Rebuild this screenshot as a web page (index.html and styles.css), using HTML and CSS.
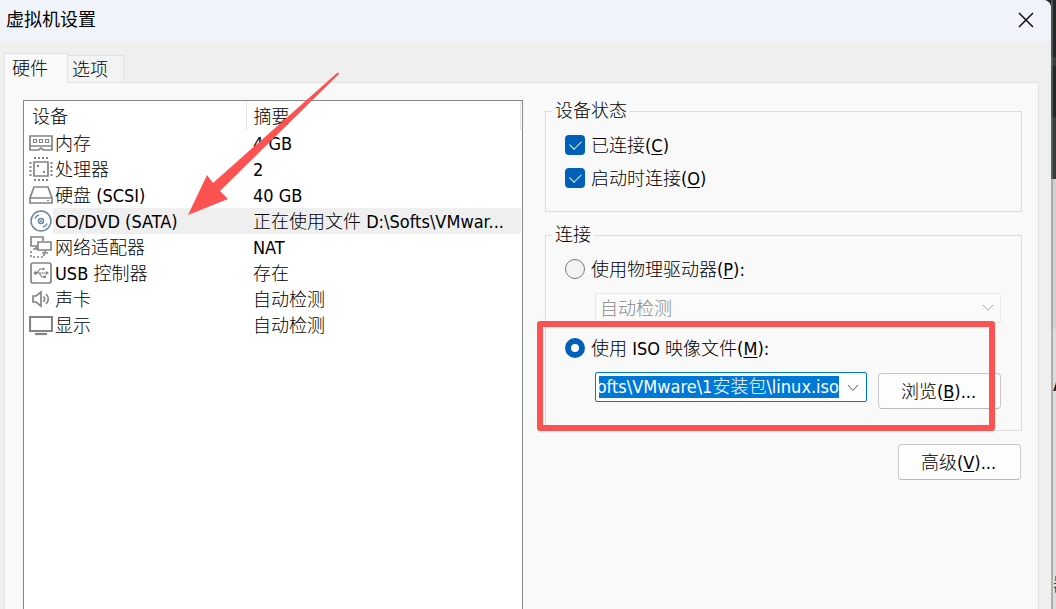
FILE: index.html
```html
<!DOCTYPE html>
<html lang="zh-CN">
<head>
    <meta charset="UTF-8">
    <meta name="viewport" content="width=device-width, initial-scale=1.0">
    <title>虚拟机设置</title>
    <link rel="stylesheet" href="styles.css">
</head>
<body>
    <main class="window">
        <header class="title-bar">
            <h1>虚拟机设置</h1>
            <button class="close-btn" aria-label="关闭">
                <svg width="16" height="16" viewBox="0 0 16 16"><path d="M1 1L15 15M15 1L1 15"/></svg>
            </button>
        </header>

        <nav class="tabs">
            <button class="tab active">硬件</button>
            <button class="tab">选项</button>
        </nav>

        <div class="panel">
            <div class="device-list">
                <table>
                    <thead>
                        <tr><th class="device">设备</th><th>摘要</th></tr>
                    </thead>
                    <tbody>
                        <tr>
                            <td class="device"><div>
                                <svg class="icon" viewBox="0 0 24 24"><path d="M1 5H23V15H1ZM1 15V19H9.500L12 17L14.500 19H23V15"/><path class="thin" d="M4.500 8.500H7.500V11.500H4.500ZM10.500 8.500H13.500V11.500H10.500ZM16.500 8.500H19.500V11.500H16.500Z"/></svg>
                                <span>内存</span>
                            </div></td>
                            <td>4 GB</td>
                        </tr>
                        <tr>
                            <td class="device"><div>
                                <svg class="icon" viewBox="0 0 24 24"><path d="M5 5H19V19H5Z"/><path class="pins" d="M5 1H19M5 23H19M1.500 5V19M22.500 5V19"/><circle class="fill" cx="9" cy="9" r="1.200"/><circle class="fill" cx="15" cy="15" r="1.200"/></svg>
                                <span>处理器</span>
                            </div></td>
                            <td>2</td>
                        </tr>
                        <tr>
                            <td class="device"><div>
                                <svg class="icon" viewBox="0 0 24 24"><path d="M5 4H19L23 15V20H1V15ZM1 15H23"/><path class="thin" d="M18 17.500H20"/></svg>
                                <span>硬盘 (SCSI)</span>
                            </div></td>
                            <td>40 GB</td>
                        </tr>
                        <tr class="selected">
                            <td class="device"><div>
                                <svg class="icon disc" viewBox="0 0 24 24"><circle cx="12" cy="12" r="10"/><circle cx="12" cy="12" r="2.500"/><circle class="fill" cx="12" cy="12" r="1"/><path d="M6 9.500C6.500 8 8 6.500 10 6M18 14.500C17.500 16 16 17.500 14 18"/></svg>
                                <span>CD/DVD (SATA)</span>
                            </div></td>
                            <td>正在使用文件 D:\Softs\VMwar...</td>
                        </tr>
                        <tr>
                            <td class="device"><div>
                                <svg class="icon" viewBox="0 0 24 24"><path d="M8 11H2V2H14V6M4 14H9M7 11V14"/><path d="M9 7H22V15H9ZM13 18H19M16 15V18"/><path class="dots" d="M2 16V22H15V18"/></svg>
                                <span>网络适配器</span>
                            </div></td>
                            <td>NAT</td>
                        </tr>
                        <tr>
                            <td class="device"><div>
                                <svg class="icon" viewBox="0 0 24 24"><rect x="2" y="2" width="20" height="20" rx="2"/><path class="thin" d="M6 12H18M8 12L11 8H14M10 12L13 16H16"/><circle class="fill" cx="6.500" cy="12" r="1.800"/><circle class="fill" cx="14.500" cy="8" r="1.200"/><path class="fill" d="M14.500 14.500H17V17H14.500ZM17 10L20 12L17 14Z"/></svg>
                                <span>USB 控制器</span>
                            </div></td>
                            <td>存在</td>
                        </tr>
                        <tr>
                            <td class="device"><div>
                                <svg class="icon" viewBox="0 0 24 24"><path d="M4 9H7L12 5V19L7 15H4Z"/><path d="M14.500 9.500C16 11 16 13 14.500 15M17 7C20 10 20 14 17 17"/></svg>
                                <span>声卡</span>
                            </div></td>
                            <td>自动检测</td>
                        </tr>
                        <tr>
                            <td class="device"><div>
                                <svg class="icon" viewBox="0 0 24 24"><path class="thick" d="M1 4H23V18H1Z"/><path class="thick" d="M6 21H18"/></svg>
                                <span>显示</span>
                            </div></td>
                            <td>自动检测</td>
                        </tr>
                    </tbody>
                </table>
                <svg class="arrow" width="152" height="144" viewBox="0 0 152 144"><path d="M0 143L19 103L25 111L149 1Q151 0 151 2L32 119L40 127Z"/></svg>
            </div>

            <div class="settings">
                <fieldset>
                    <legend>设备状态</legend>
                    <div class="status-options">
                        <label><input type="checkbox" checked><span>已连接(<u>C</u>)</span></label>
                        <label><input type="checkbox" checked><span>启动时连接(<u>O</u>)</span></label>
                    </div>
                </fieldset>

                <div class="connection">
                    <fieldset>
                        <legend>连接</legend>
                        <div class="connection-options">
                            <label><input type="radio" name="source"><span>使用物理驱动器(<u>P</u>):</span></label>
                            <div class="drive-select">
                                <select aria-label="物理驱动器" disabled>
                                    <option>自动检测</option>
                                </select>
                                <svg class="chevron" width="12" height="8" viewBox="0 0 12 8"><path d="M1 1L6 6.500L11 1"/></svg>
                            </div>
                            <label><input type="radio" name="source" checked><span>使用 ISO 映像文件(<u>M</u>):</span></label>
                            <div class="iso-row">
                                <div class="combo">
                                    <input type="text" id="isoPath" aria-label="ISO 映像文件" value="D:\Softs\VMware\1安装包\linux.iso" spellcheck="false">
                                    <button aria-label="展开">
                                        <svg class="chevron" width="12" height="8" viewBox="0 0 12 8"><path d="M1 1L6 6.500L11 1"/></svg>
                                    </button>
                                </div>
                                <button class="push-btn">浏览(<u>B</u>)...</button>
                            </div>
                        </div>
                    </fieldset>
                    <div class="highlight-frame"></div>
                </div>

                <button class="push-btn advanced">高级(<u>V</u>)...</button>
            </div>
        </div>
    </main>

    <aside class="backdrop">
        <b>A</b>
        <span>器</span>
    </aside>

    <script>
        // Select the path and keep its end in view
        const isoPath = document.getElementById('isoPath');
        isoPath.focus();
        isoPath.select();
        isoPath.scrollLeft = isoPath.scrollWidth;
    </script>
</body>
</html>
```
FILE: styles.css
```css
* {
    margin: 0;
    padding: 0;
    box-sizing: border-box;
}

body {
    display: grid;
    grid-template-columns: minmax(0, 1fr) 5px;
    height: 100vh;
    overflow: hidden;
    background: #242727;
    color: #000;
    font-family: "DejaVu Sans Condensed", "Noto Sans CJK SC", sans-serif;
    font-size: 18px;
    font-weight: 300;
    line-height: 22px;
}

button, input, select {
    font: inherit;
    color: inherit;
}

u {
    text-underline-offset: 2px;
}

.window {
    display: flex;
    flex-direction: column;
    min-height: 0;
    background: #efefef;
    border-top-right-radius: 8px;
    overflow: hidden;
}

/* Title bar */
.title-bar {
    display: flex;
    justify-content: space-between;
    align-items: center;
    flex: none;
    height: 42px;
    padding: 0 17px 2px 6px;
    background: #f0f3f9;
}

.title-bar h1 {
    font-size: 18px;
    font-weight: 400;
}

.close-btn {
    display: flex;
    border: none;
    background: none;
}

.close-btn path {
    fill: none;
    stroke: #111;
    stroke-width: 1.5;
}

/* Tabs */
.tabs {
    display: flex;
    align-items: flex-end;
    flex: none;
    height: 41px;
    padding-left: 4px;
}

.tab {
    width: 56px;
    height: 28px;
    padding: 2px 11px 0 0;
    border: 1px solid #e2e2e2;
    border-left: none;
    background: #f3f3f3;
}

.tab.active {
    position: relative;
    width: 64px;
    height: 30px;
    padding: 0 12px 0 0;
    border: 1px solid #e2e2e2;
    border-bottom: none;
    background: #f9f9f9;
}

.panel {
    display: grid;
    grid-template-columns: minmax(0, 500fr) minmax(0, 477fr);
    gap: 22px;
    flex: 1;
    min-height: 0;
    margin: -1px 12px 0 4px;
    padding: 17px 16px 0 18px;
    border: 1px solid #e2e2e2;
    border-bottom: none;
    background: #f9f9f9;
}

/* Device list */
.device-list {
    position: relative;
    padding: 0 1px 0 5px;
    border: 1px solid #828790;
    border-bottom: none;
    background: #fff;
}

table {
    width: 100%;
    border-collapse: collapse;
    table-layout: fixed;
}

th {
    height: 29px;
    padding: 2px 0 0 7px;
    border-right: 1px solid #e2e2e2;
    font-weight: inherit;
    text-align: left;
}

th.device {
    width: 217px;
    padding-left: 3px;
}

td {
    height: 26px;
    padding: 2px 0 0 7px;
    white-space: nowrap;
}

td.device {
    padding: 0;
}

td.device div {
    display: flex;
    align-items: center;
}

td.device span {
    flex: 1;
    padding: 3px 2px 1px;
}

.selected td:not(.device),
.selected span {
    background: #efefef;
}

.icon {
    width: 24px;
    height: 24px;
    fill: none;
    stroke: #858585;
    stroke-width: 1.7;
}

.icon .thin {
    stroke-width: 1.2;
}

.icon .pins {
    stroke-width: 2;
    stroke-dasharray: 2;
}

.icon .dots {
    stroke-dasharray: 2;
}

.icon .thick {
    stroke-width: 2.2;
}

.icon .fill {
    fill: #858585;
    stroke: none;
}

.icon.disc {
    stroke: #6685a3;
    stroke-width: 1.5;
}

.arrow {
    position: absolute;
    top: -29px;
    left: 164px;
    fill: #fd5252;
}

/* Settings */
fieldset {
    min-width: 0;
    border: 1px solid #dcdcdc;
}

legend {
    margin-left: 6px;
    padding: 0 3px;
}

label {
    display: flex;
    align-items: center;
    gap: 6px;
    height: 22px;
}

label span {
    padding-top: 2px;
}

.status-options {
    display: grid;
    gap: 11px;
    padding: 12px 19px 22px;
}

input[type="checkbox"],
input[type="radio"] {
    appearance: none;
    width: 20px;
    height: 20px;
}

input[type="checkbox"] {
    display: grid;
    place-items: center;
    border-radius: 4px;
    background: #005fb8;
}

input[type="checkbox"]::before {
    content: "";
    width: 10px;
    height: 6px;
    margin-bottom: 3px;
    border: solid #fff;
    border-width: 0 0 1px 1px;
    transform: rotate(-45deg);
}

input[type="radio"] {
    border: 1px solid #777;
    border-radius: 50%;
    background: #f3f3f3;
}

input[type="radio"]:checked {
    border: 6px solid #005fb8;
    background: #fff;
}

.connection {
    position: relative;
    margin: 12px 0 13px;
}

.connection-options {
    padding: 12px 20px 21px 19px;
}

.drive-select {
    position: relative;
    margin: 13px 0 14px 30px;
}

.drive-select select {
    display: block;
    appearance: none;
    width: 100%;
    height: 30px;
    padding: 2px 0 0 4px;
    border: 1px solid #e8e8e8;
    border-radius: 2px;
    background: #fbfbfb;
    color: #888;
    opacity: 1;
}

.chevron {
    fill: none;
    stroke: #555;
}

.drive-select .chevron {
    position: absolute;
    top: 11px;
    right: 7px;
    stroke: #aaa;
}

.iso-row {
    display: flex;
    align-items: flex-start;
    gap: 11px;
    margin: 13px 0 0 30px;
}

.combo {
    display: flex;
    flex: 1;
    min-width: 0;
    height: 30px;
    padding: 2px 0 2px 3px;
    border: 1px solid #0078d7;
    border-radius: 2px;
    background: #fff;
}

.combo input {
    flex: 1;
    min-width: 0;
    border: none;
    outline: none;
    background: none;
}

.combo input::selection {
    background: #0078d7;
    color: #fff;
}

.combo button {
    width: 27px;
    border: none;
    background: none;
}

.combo .chevron {
    vertical-align: middle;
}

.push-btn {
    width: 123px;
    height: 36px;
    margin-top: 1px;
    padding: 2px 2px 0 0;
    border: 1px solid #c8c8c8;
    border-bottom-color: #b8b8b8;
    border-radius: 4px;
    background: #fdfdfd;
}

.push-btn.advanced {
    display: block;
    margin: 0 1px 0 auto;
}

.highlight-frame {
    position: absolute;
    top: 97px;
    right: 27px;
    bottom: 0;
    left: -8px;
    border: 6px solid #fd5252;
    border-radius: 3px;
    pointer-events: none;
}

/* Edge of the window behind the dialog */
.backdrop {
    display: flex;
    flex-direction: column;
    justify-content: flex-end;
    gap: 180px;
    overflow: hidden;
    padding-bottom: 13px;
    border-left: 2px solid rgba(130, 130, 130, 0.5);
    background: linear-gradient(#242727 57px, #383b3b 57px 66px, #242727 66px 117px, #383b3b 117px 179px, #d0d2d2 179px 329px, #dcdcdc 329px);
    color: #112;
}

.backdrop b {
    font-size: 24px;
}
```
